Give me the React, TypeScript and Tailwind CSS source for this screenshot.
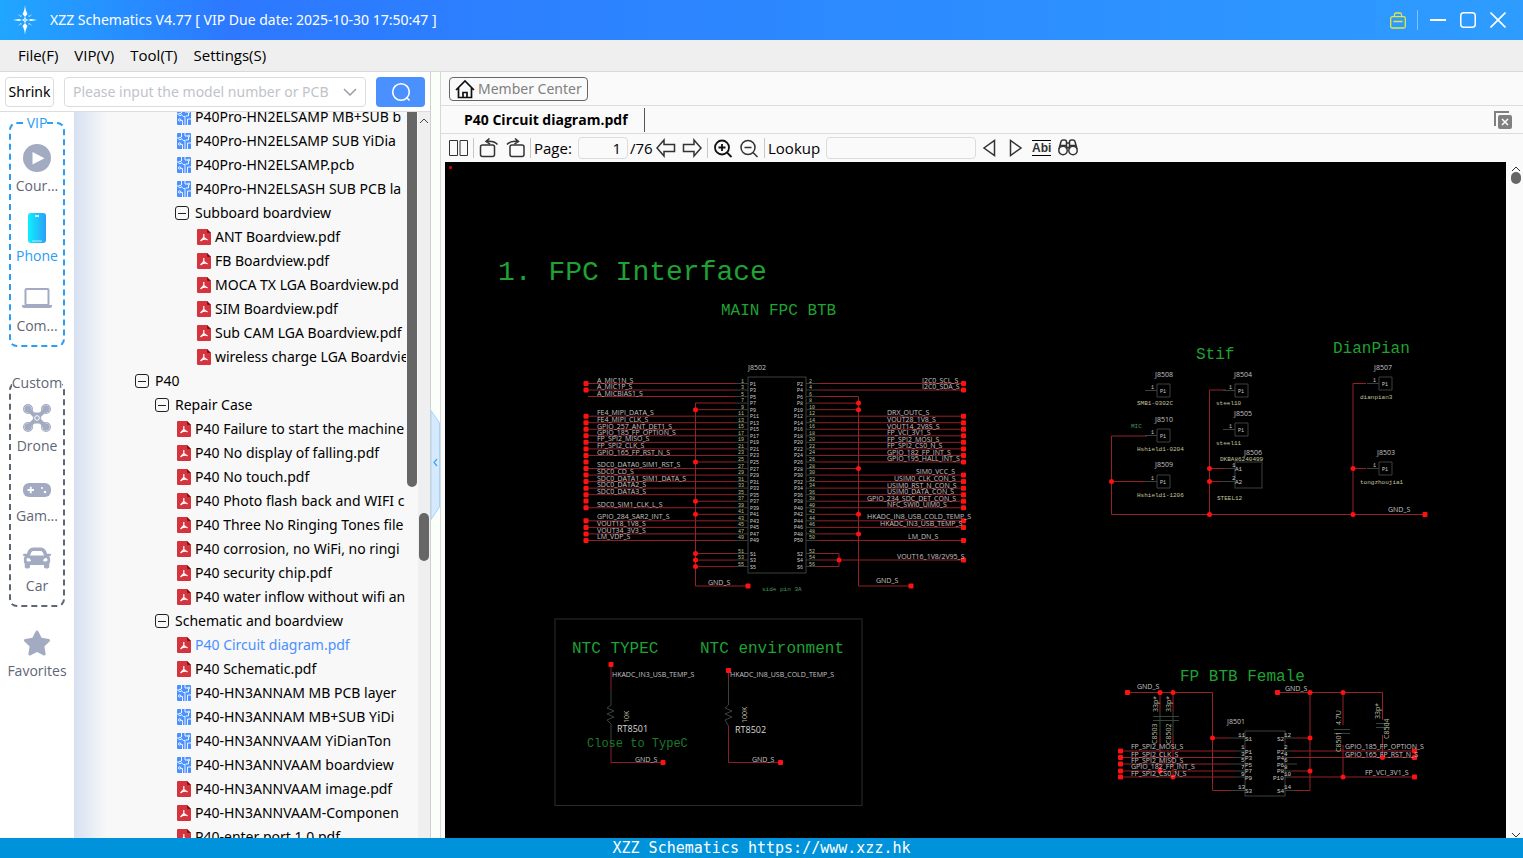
import { useState } from "react";
import type { ReactNode } from "react";
import { FaCar, FaStar } from "react-icons/fa";

// ---------------------------------------------------------------------------
// Types
// ---------------------------------------------------------------------------

type NodeKind = "folder" | "pdf" | "pcb";

interface TreeNode {
  level: number;
  kind: NodeKind;
  name: string;
}

interface Tag {
  x: number;
  y: number;
  text: string;
}

type Point = [number, number];

// ---------------------------------------------------------------------------
// Data
// ---------------------------------------------------------------------------

const TREE: TreeNode[] = [
  { level: 2, kind: "pcb", name: "P40Pro-HN2ELSAMP MB+SUB b" },
  { level: 2, kind: "pcb", name: "P40Pro-HN2ELSAMP SUB YiDia" },
  { level: 2, kind: "pcb", name: "P40Pro-HN2ELSAMP.pcb" },
  { level: 2, kind: "pcb", name: "P40Pro-HN2ELSASH SUB PCB la" },
  { level: 2, kind: "folder", name: "Subboard boardview" },
  { level: 3, kind: "pdf", name: "ANT Boardview.pdf" },
  { level: 3, kind: "pdf", name: "FB Boardview.pdf" },
  { level: 3, kind: "pdf", name: "MOCA TX LGA Boardview.pd" },
  { level: 3, kind: "pdf", name: "SIM Boardview.pdf" },
  { level: 3, kind: "pdf", name: "Sub CAM LGA Boardview.pdf" },
  { level: 3, kind: "pdf", name: "wireless charge LGA Boardvie" },
  { level: 0, kind: "folder", name: "P40" },
  { level: 1, kind: "folder", name: "Repair Case" },
  { level: 2, kind: "pdf", name: "P40 Failure to start the machine" },
  { level: 2, kind: "pdf", name: "P40 No display of falling.pdf" },
  { level: 2, kind: "pdf", name: "P40 No touch.pdf" },
  { level: 2, kind: "pdf", name: "P40 Photo flash back and WIFI c" },
  { level: 2, kind: "pdf", name: "P40 Three No Ringing Tones file" },
  { level: 2, kind: "pdf", name: "P40 corrosion, no WiFi, no ringi" },
  { level: 2, kind: "pdf", name: "P40 security chip.pdf" },
  { level: 2, kind: "pdf", name: "P40 water inflow without wifi an" },
  { level: 1, kind: "folder", name: "Schematic and boardview" },
  { level: 2, kind: "pdf", name: "P40 Circuit diagram.pdf" },
  { level: 2, kind: "pdf", name: "P40 Schematic.pdf" },
  { level: 2, kind: "pcb", name: "P40-HN3ANNAM MB PCB layer" },
  { level: 2, kind: "pcb", name: "P40-HN3ANNAM MB+SUB YiDi" },
  { level: 2, kind: "pcb", name: "P40-HN3ANNVAAM YiDianTon" },
  { level: 2, kind: "pcb", name: "P40-HN3ANNVAAM boardview" },
  { level: 2, kind: "pdf", name: "P40-HN3ANNVAAM image.pdf" },
  { level: 2, kind: "pdf", name: "P40-HN3ANNVAAM-Componen" },
  { level: 2, kind: "pdf", name: "P40-enter port 1.0.pdf" },
];

const INDENT = ["pl-[61px]", "pl-[81px]", "pl-[101px]", "pl-[121px]"];

const MENUS = ["File(F)", "VIP(V)", "Tool(T)", "Settings(S)"];

// ---------------------------------------------------------------------------
// Icons
// ---------------------------------------------------------------------------

function Logo() {
  return (
    <svg width="26" height="30" viewBox="0 0 26 30" fill="#fff">
      <path d="M13 0Q13.500 6 15.500 9L13 12 10.500 9Q12.500 6 13 0Z M13 30Q13.500 24 15.500 21L13 18 10.500 21Q12.500 24 13 30Z" />
      <path d="M1 15 7 14 10 15 7 16Z M25 15 19 14 16 15 19 16Z" />
      <path d="M6.500 9.500 9 12V10M19.500 9.500 17 12V10M6.500 20.500 9 18V20M19.500 20.500 17 18V20" fill="none" stroke="#9fcdff" />
      <path d="M12.500 12.500V14.500H10.500M13.500 12.500V14.500H15.500M12.500 17.500V15.500H10.500M13.500 17.500V15.500H15.500" fill="none" stroke="#fff" strokeWidth=".8" />
    </svg>
  );
}

function PcbIcon() {
  return (
    <svg width="14" height="16" viewBox="0 0 14 16" fill="none">
      <rect width="14" height="16" rx="1" fill="#4a90ff" />
      <g stroke="#fff" strokeWidth=".9">
        <path d="M4.500 0V4M8 0V3H11M0 5H1.500M4.500 6 6.500 7.500H8V16M5.500 16V11.500H4M10.500 16V10H14M11.500 4V7H8.500" />
        <circle cx="3" cy="5.500" r="1.300" />
        <circle cx="2.700" cy="11" r="1.200" />
        <circle cx="11.800" cy="3" r="1" />
      </g>
    </svg>
  );
}

function PdfIcon() {
  return (
    <svg width="14" height="16" viewBox="0 0 14 16" fill="none">
      <path d="M1 0H10L14 4V15Q14 16 13 16H1Q0 16 0 15V1Q0 0 1 0Z" fill="#d5343e" />
      <path d="M10 0V3Q10 4 11 4H14Z" fill="#7d1219" />
      <path d="M6.800 5V8.500L3.500 12M6.800 8.500 10.500 11M4 11.500Q7 9.500 10.500 10.500" stroke="#fff" strokeWidth="1.200" />
    </svg>
  );
}

function CollapseIcon() {
  return (
    <svg width="14" height="14" viewBox="0 0 14 14" fill="none" stroke="#222">
      <rect x=".5" y=".5" width="13" height="13" rx="2.500" />
      <path d="M3 7.500H11" />
    </svg>
  );
}

function CourseIcon() {
  return (
    <svg width="28" height="28" viewBox="0 0 28 28">
      <circle cx="14" cy="14" r="14" fill="#a2abc1" />
      <path d="M9.500 8V20.500L21.500 14.200Z" fill="#fff" />
    </svg>
  );
}

function PhoneIcon() {
  return (
    <svg width="18" height="30" viewBox="0 0 18 30">
      <defs>
        <linearGradient id="phone" x1="0" y1="0" x2="1" y2="0">
          <stop offset="0" stopColor="#0ef0ff" />
          <stop offset="1" stopColor="#2b9ff8" />
        </linearGradient>
      </defs>
      <rect width="18" height="30" rx="3" fill="url(#phone)" />
      <path d="M7 3H11" stroke="#fff" strokeWidth="1.500" />
      <path d="M4 28H14" stroke="#b8efff" />
    </svg>
  );
}

function LaptopIcon() {
  return (
    <svg width="30" height="20" viewBox="0 0 30 20" fill="none">
      <rect x="3.500" y="1" width="23" height="16" rx="1" stroke="#a2abc1" strokeWidth="2" />
      <path d="M0 17H30V18Q30 20 28 20H2Q0 20 0 18Z" fill="#a2abc1" />
    </svg>
  );
}

function DroneIcon() {
  return (
    <svg width="28" height="28" viewBox="0 0 28 28" fill="none" stroke="#a2abc1">
      <path d="M5 5 11 11M23 5 17 11M5 23 11 17M23 23 17 17" strokeWidth="4" />
      <g fill="#a2abc1">
        <circle cx="5" cy="5" r="3.200" />
        <circle cx="23" cy="5" r="3.200" />
        <circle cx="5" cy="23" r="3.200" />
        <circle cx="23" cy="23" r="3.200" />
        <path d="M9.500 9H18.500L17.500 14 18.500 19H9.500L10.500 14Z" />
      </g>
      <g strokeWidth="1.200">
        <circle cx="5" cy="5" r="4.400" />
        <circle cx="23" cy="5" r="4.400" />
        <circle cx="5" cy="23" r="4.400" />
        <circle cx="23" cy="23" r="4.400" />
      </g>
      <circle cx="14" cy="14" r="2.300" stroke="#fff" />
    </svg>
  );
}

function GameIcon() {
  return (
    <svg width="28" height="18" viewBox="0 0 28 18">
      <rect y="4" width="28" height="14" rx="6" fill="#a2abc1" />
      <path d="M4.500 11H11M7.750 7.700V14.300" stroke="#fff" strokeWidth="1.800" />
      <circle cx="19" cy="9" r="1" fill="#fff" />
      <circle cx="22" cy="13" r="1.300" fill="#fff" />
    </svg>
  );
}

// Line icon in the viewer toolbar; every one is drawn on a 20px square.
function ToolIcon({ children }: { children: ReactNode }) {
  return (
    <svg width="20" height="20" viewBox="0 0 20 20" fill="none" stroke="#333" strokeWidth="1.500">
      {children}
    </svg>
  );
}

// ---------------------------------------------------------------------------
// Title bar and menu
// ---------------------------------------------------------------------------

function TitleBar() {
  return (
    <header className="flex h-10 shrink-0 items-center bg-linear-to-r from-[#20a6ff] via-[#2d78ff] via-15% to-[#2e9cff] pr-[17px] pl-3 text-white">
      <Logo />
      <h1 className="ml-3 font-['Noto_Sans',sans-serif] text-sm">XZZ Schematics V4.77 [ VIP Due date: 2025-10-30 17:50:47 ]</h1>
      <div className="ml-auto flex items-center">
        <button aria-label="Toolbox">
          <svg width="16" height="17" viewBox="0 0 16 17" fill="none" stroke="#e3e63c" strokeWidth="1.300">
            <rect x=".7" y="4.700" width="14.600" height="11.300" rx="1.500" />
            <path d="M4.500 4.500V2.500Q4.500 1 6 1H10Q11.500 1 11.500 2.500V4.500M3.500 9.500H12.500" />
          </svg>
        </button>
        <span className="mr-3 ml-[11px] h-5 w-px bg-white/40" />
        <button aria-label="Minimize">
          <svg width="16" height="16" viewBox="0 0 16 16" stroke="#fff" strokeWidth="2">
            <path d="M0 8H16" />
          </svg>
        </button>
        <button aria-label="Maximize" className="ml-3.5">
          <svg width="16" height="16" viewBox="0 0 16 16" fill="none" stroke="#fff" strokeWidth="1.500">
            <rect x=".75" y=".75" width="14.500" height="14.500" rx="3" />
          </svg>
        </button>
        <button aria-label="Close" className="ml-3.5">
          <svg width="16" height="16" viewBox="0 0 16 16" stroke="#fff" strokeWidth="1.600">
            <path d="M.5.5 15.500 15.500M15.500.5.5 15.500" />
          </svg>
        </button>
      </div>
    </header>
  );
}

function MenuBar() {
  return (
    <nav className="flex h-8 shrink-0 items-center gap-4 border-b border-[#d8d8d8] bg-[#efefef] pl-[18px]">
      {MENUS.map((menu) => (
        <button key={menu}>{menu}</button>
      ))}
    </nav>
  );
}

// ---------------------------------------------------------------------------
// Left side
// ---------------------------------------------------------------------------

function SearchRow() {
  return (
    <div className="flex h-10 shrink-0 items-center border-b border-[#dcdcdc] bg-white px-[5px] font-['Noto_Sans',sans-serif] text-sm">
      <button className="h-[30px] w-[49px] shrink-0 rounded border border-[#dcdcdc]">Shrink</button>
      <div className="ml-2.5 flex h-[30px] min-w-0 grow items-center rounded border border-[#dcdcdc] pr-2 pl-2">
        <input
          aria-label="Model number or PCB"
          placeholder="Please input the model number or PCB"
          className="min-w-0 grow outline-none placeholder:text-[#bfc3ca]"
        />
        <svg width="14" height="8" viewBox="0 0 14 8" fill="none" stroke="#9a9ea8" strokeWidth="1.500" className="ml-1 shrink-0">
          <path d="M1 1 7 7 13 1" />
        </svg>
      </div>
      <button aria-label="Search" className="ml-2.5 flex h-[30px] w-[49px] shrink-0 items-center justify-center rounded-sm bg-[#4a90ff]">
        <svg width="20" height="20" viewBox="0 0 20 20" fill="none" stroke="#fff" strokeWidth="1.600">
          <circle cx="10" cy="10" r="8.300" />
          <path d="M15.500 15.500 18.500 18.500" />
        </svg>
      </button>
    </div>
  );
}

function RailItem({ icon, label, active }: { icon: ReactNode; label: string; active?: boolean }) {
  return (
    <button className={`flex h-14 flex-col items-center ${active ? "text-[#2b9df4]" : "text-[#5f6675]"}`}>
      <span className="flex h-8 items-center text-[#a2abc1]">{icon}</span>
      <span className="leading-6">{label}</span>
    </button>
  );
}

function Rail() {
  return (
    <aside className="flex w-[74px] shrink-0 flex-col items-center overflow-hidden bg-white text-sm">
      <fieldset className="w-14 rounded-lg border-2 border-dashed border-[#2b9df4]">
        <legend className="mx-auto leading-[22px] text-[#2b9df4]">VIP</legend>
        <div className="flex flex-col gap-3.5 pt-2 pb-[7px]">
          <RailItem icon={<CourseIcon />} label="Cour..." />
          <RailItem icon={<PhoneIcon />} label="Phone" active />
          <RailItem icon={<LaptopIcon />} label="Com..." />
        </div>
      </fieldset>
      <fieldset className="mt-[25px] w-14 rounded-lg border-2 border-dashed border-[#5f6675]">
        <legend className="mx-auto leading-[22px] text-[#5f6675]">Custom</legend>
        <div className="flex flex-col gap-3.5 pt-2 pb-[7px]">
          <RailItem icon={<DroneIcon />} label="Drone" />
          <RailItem icon={<GameIcon />} label="Gam..." />
          <RailItem icon={<FaCar size={28} />} label="Car" />
        </div>
      </fieldset>
      <div className="mt-5">
        <RailItem icon={<FaStar size={28} />} label="Favorites" />
      </div>
    </aside>
  );
}

function FileTree() {
  const [selected, setSelected] = useState("P40 Circuit diagram.pdf");

  return (
    <div className="min-w-0 grow overflow-hidden bg-linear-to-r from-[#d7e1f1] to-[#f8f8f8] to-10% font-['Noto_Sans',sans-serif] text-sm">
      <ul className="-mt-[7px]">
        {TREE.map((node) => (
          <li key={node.name} className={`h-6 ${INDENT[node.level]}`}>
            <button
              onClick={() => setSelected(node.name)}
              className={`flex h-6 items-center whitespace-nowrap ${node.name === selected ? "text-[#4a90ff]" : "text-black"}`}
            >
              <span className={`w-5 shrink-0 ${node.kind === "folder" ? "" : "pl-0.5"}`}>
                {node.kind === "folder" && <CollapseIcon />}
                {node.kind === "pdf" && <PdfIcon />}
                {node.kind === "pcb" && <PcbIcon />}
              </span>
              {node.name}
            </button>
          </li>
        ))}
      </ul>
    </div>
  );
}

function LeftPanel() {
  return (
    <section className="flex w-[431px] shrink-0 flex-col border-r border-[#d0d0d0]">
      <SearchRow />
      <div className="flex min-h-0 grow">
        <Rail />
        <FileTree />
        {/* list scroll bar */}
        <div className="w-3 shrink-0 bg-[#f8f8f8]">
          <div className="mx-px h-[375px] rounded-b-full bg-[#666]" />
        </div>
        {/* panel scroll bar */}
        <div className="flex w-3 shrink-0 flex-col items-center bg-[#efefef] pt-1.5">
          <svg width="10" height="6" viewBox="0 0 10 6" fill="none" stroke="#444">
            <path d="M1 5 5 1 9 5" />
          </svg>
          <div className="mt-[389px] h-12 w-2.5 rounded-full bg-[#666]" />
        </div>
      </div>
    </section>
  );
}

function Splitter() {
  return (
    <div className="flex w-2.5 shrink-0 items-center border-r border-[#d8d8d8] bg-[#fafffa] pt-5">
      <button aria-label="Hide panel">
        <svg width="9" height="110" viewBox="0 0 9 110" fill="none">
          <path d="M0 .5 8.500 13V97L0 109.500Z" fill="#d6eaff" stroke="#a5d4f8" />
          <path d="M6 49 3 52.500 6 56" stroke="#3ea6ef" strokeWidth="1.200" />
        </svg>
      </button>
    </div>
  );
}

// ---------------------------------------------------------------------------
// Viewer toolbar
// ---------------------------------------------------------------------------

function Separator() {
  return <span className="h-5 w-px shrink-0 bg-[#c8c8c8]" />;
}

function Toolbar() {
  return (
    <div className="flex h-7 shrink-0 items-center pl-2">
      <button aria-label="Two pages">
        <ToolIcon>
          <path d="M.5 2.500H8.500V17.500H.5ZM11 2.500H18.500V17.500H11Z" strokeWidth="1" />
        </ToolIcon>
      </button>
      <span className="w-1" />
      <Separator />
      <button aria-label="Rotate left" className="ml-[5px]">
        <ToolIcon>
          <rect x="1.500" y="7" width="14" height="11.500" rx="2" />
          <path d="M18.500 6.500Q15 2.500 7 3.500M10.500.5 7 3.500 11 6" />
        </ToolIcon>
      </button>
      <button aria-label="Rotate right" className="ml-[7px]">
        <ToolIcon>
          <rect x="4" y="7" width="14" height="11.500" rx="2" />
          <path d="M1 6.500Q4.500 2.500 12.500 3.500M9 .5 12.500 3.500 8.500 6" />
        </ToolIcon>
      </button>
      <span className="w-1" />
      <Separator />
      <label htmlFor="page" className="ml-[3px] w-11">
        Page:
      </label>
      <input id="page" defaultValue="1" className="h-[22px] w-[50px] rounded-sm border border-[#dcdcdc] px-1.5 text-right outline-none" />
      <span className="ml-0.5 w-6">/76</span>
      <button aria-label="Previous page" className="ml-0.5">
        <ToolIcon>
          <path d="M1 10 8 2V6.500H18.500V13.500H8V18Z" />
        </ToolIcon>
      </button>
      <button aria-label="Next page" className="ml-1.5">
        <ToolIcon>
          <path d="M19 10 12 2V6.500H1.500V13.500H12V18Z" />
        </ToolIcon>
      </button>
      <span className="w-[5px]" />
      <Separator />
      <button aria-label="Zoom in" className="ml-[5px]">
        <ToolIcon>
          <g stroke="#111" strokeWidth="1.800">
            <circle cx="9" cy="9.500" r="7" />
            <path d="M14 14.500 18.500 19M5.500 9.500H12.500M9 6V13" />
          </g>
        </ToolIcon>
      </button>
      <button aria-label="Zoom out" className="ml-1.5">
        <ToolIcon>
          <circle cx="9" cy="9.500" r="7" />
          <path d="M14 14.500 18.500 19M5.500 9.500H12.500" />
        </ToolIcon>
      </button>
      <span className="w-[5px]" />
      <Separator />
      <label htmlFor="lookup" className="ml-[3px] w-[58px]">
        Lookup
      </label>
      <input id="lookup" className="h-[22px] w-[150px] rounded-sm border border-[#dcdcdc] px-1.5 outline-none" />
      <button aria-label="Find previous" className="ml-1">
        <ToolIcon>
          <path d="M14.500 2.500V17.500L4 10Z" />
        </ToolIcon>
      </button>
      <button aria-label="Find next" className="ml-[5px]">
        <ToolIcon>
          <path d="M5.500 2.500V17.500L16 10Z" />
        </ToolIcon>
      </button>
      <button className="ml-[7px] h-4 border-y border-black font-['Liberation_Sans',sans-serif] text-xs leading-[14px] font-bold text-[#333]">Abi</button>
      <button aria-label="Search all" className="ml-[7px]">
        <ToolIcon>
          <circle cx="5" cy="12.500" r="4.200" />
          <circle cx="15" cy="12.500" r="4.200" />
          <path d="M1 11 3 3.500Q3.500 2 5 2H6.500Q8.500 2 8.500 4V11M19 11 17 3.500Q16.500 2 15 2H13.500Q11.500 2 11.500 4V11M8.500 5H11.500M8.500 9.500H11.500M2 7.500H8M12 7.500H18" />
        </ToolIcon>
      </button>
    </div>
  );
}

// ---------------------------------------------------------------------------
// Schematic drawing
// ---------------------------------------------------------------------------

const PIN_TOP = 383.5;
const PIN_STEP = 6.54;

const rowY = (row: number) => PIN_TOP + row * PIN_STEP;

const NET_TAGS: Tag[] = [
  { x: 597, y: 383, text: "A_MIC1N_S" },
  { x: 597, y: 389, text: "A_MIC1P_S" },
  { x: 597, y: 396, text: "A_MICBIAS1_S" },
  { x: 597, y: 415, text: "FE4_MIPI_DATA_S" },
  { x: 597, y: 422, text: "FE4_MIPI_CLK_S" },
  { x: 597, y: 429, text: "GPIO_257_ANT_DET1_S" },
  { x: 597, y: 435, text: "GPIO_185_FP_OPTION_S" },
  { x: 597, y: 441, text: "FP_SPI2_MISO_S" },
  { x: 597, y: 448, text: "FP_SPI2_CLK_S" },
  { x: 597, y: 455, text: "GPIO_165_FP_RST_N_S" },
  { x: 597, y: 467, text: "SDC0_DATA0_SIM1_RST_S" },
  { x: 597, y: 474, text: "SDC0_CD_S" },
  { x: 597, y: 481, text: "SDC0_DATA1_SIM1_DATA_S" },
  { x: 597, y: 487, text: "SDC0_DATA2_S" },
  { x: 597, y: 494, text: "SDC0_DATA3_S" },
  { x: 597, y: 507, text: "SDC0_SIM1_CLK_L_S" },
  { x: 597, y: 519, text: "GPIO_284_SAR2_INT_S" },
  { x: 597, y: 526, text: "VOUT18_1V8_S" },
  { x: 597, y: 533, text: "VOUT34_3V3_S" },
  { x: 597, y: 539, text: "LM_VDP_S" },
  { x: 708, y: 585, text: "GND_S" },
  { x: 922, y: 383, text: "I2C0_SCL_S" },
  { x: 922, y: 389, text: "I2C0_SDA_S" },
  { x: 887, y: 415, text: "DRX_OUTC_S" },
  { x: 887, y: 422, text: "VOUT28_1V8_S" },
  { x: 887, y: 429, text: "VOUT14_2V8S_S" },
  { x: 887, y: 435, text: "FP_VCI_3V1_S" },
  { x: 887, y: 442, text: "FP_SPI2_MOSI_S" },
  { x: 887, y: 448, text: "FP_SPI2_CS0_N_S" },
  { x: 887, y: 455, text: "GPIO_182_FP_INT_S" },
  { x: 887, y: 461, text: "GPIO_195_HALL_INT_S" },
  { x: 916, y: 474, text: "SIM0_VCC_S" },
  { x: 894, y: 481, text: "USIM0_CLK_CON_S" },
  { x: 887, y: 488, text: "USIM0_RST_N_CON_S" },
  { x: 887, y: 494, text: "USIM0_DATA_CON_S" },
  { x: 867, y: 501, text: "GPIO_234_SDC_DET_CON_S" },
  { x: 887, y: 507, text: "NFC_SWI0_UIM0_S" },
  { x: 867, y: 519, text: "HKADC_IN8_USB_COLD_TEMP_S" },
  { x: 880, y: 526, text: "HKADC_IN3_USB_TEMP_S" },
  { x: 908, y: 539, text: "LM_DN_S" },
  { x: 897, y: 559, text: "VOUT16_1V8/2V95_S" },
  { x: 876, y: 583, text: "GND_S" },
  { x: 748, y: 370, text: "J8502" },
  // NTC
  { x: 612, y: 677, text: "HKADC_IN3_USB_TEMP_S" },
  { x: 730, y: 677, text: "HKADC_IN8_USB_COLD_TEMP_S" },
  { x: 635, y: 762, text: "GND_S" },
  { x: 752, y: 762, text: "GND_S" },
  // shields
  { x: 1155, y: 377, text: "J8508" },
  { x: 1155, y: 422, text: "J8510" },
  { x: 1155, y: 467, text: "J8509" },
  { x: 1234, y: 377, text: "J8504" },
  { x: 1234, y: 416, text: "J8505" },
  { x: 1244, y: 455, text: "J8506" },
  { x: 1374, y: 370, text: "J8507" },
  { x: 1377, y: 455, text: "J8503" },
  { x: 1388, y: 512, text: "GND_S" },
  // FP BTB
  { x: 1137, y: 689, text: "GND_S" },
  { x: 1285, y: 691, text: "GND_S" },
  { x: 1227, y: 724, text: "J8501" },
  { x: 1131, y: 749, text: "FP_SPI2_MOSI_S" },
  { x: 1131, y: 757, text: "FP_SPI2_CLK_S" },
  { x: 1131, y: 763, text: "FP_SPI2_MISO_S" },
  { x: 1131, y: 769, text: "GPIO_182_FP_INT_S" },
  { x: 1131, y: 776, text: "FP_SPI2_CS0_N_S" },
  { x: 1345, y: 749, text: "GPIO_185_FP_OPTION_S" },
  { x: 1345, y: 757, text: "GPIO_165_FP_RST_N_S" },
  { x: 1365, y: 775, text: "FP_VCI_3V1_S" },
];

const PART_TAGS: Tag[] = [
  { x: 1137, y: 405, text: "SMB1-0302C" },
  { x: 1137, y: 451, text: "Hshield1-0204" },
  { x: 1137, y: 497, text: "Hshield1-1206" },
  { x: 1216, y: 405, text: "steel10" },
  { x: 1216, y: 445, text: "steel11" },
  { x: 1220, y: 461, text: "DKBA86240499" },
  { x: 1217, y: 500, text: "STEEL12" },
  { x: 1360, y: 399, text: "dianpian3" },
  { x: 1360, y: 484, text: "tongzhoujia1" },
];

const SIDEWAYS_TAGS: Tag[] = [
  { x: 629, y: 723, text: "10K" },
  { x: 747, y: 723, text: "100K" },
  { x: 1158, y: 712, text: "33p*" },
  { x: 1171, y: 712, text: "33p*" },
  { x: 1157, y: 744, text: "C8503" },
  { x: 1171, y: 744, text: "C8502" },
  { x: 1341, y: 725, text: "4.7U" },
  { x: 1341, y: 752, text: "C8501" },
  { x: 1380, y: 719, text: "33p*" },
  { x: 1389, y: 739, text: "C8504" },
];

// Rows counted from the first pin pair of J8502.
const LEFT_NETS = [0, 1, 5, 6, 7, 8, 9, 10, 11, 13, 14, 15, 16, 17, 19, 21, 22, 23, 24];
const LEFT_GROUND = [4, 12, 18, 20, 26, 27, 28];
const RIGHT_NETS = [0, 1, 5, 6, 7, 8, 9, 10, 11, 12, 14, 15, 16, 17, 18, 19, 21, 22, 24];
const RIGHT_GROUND = [3, 4, 13, 20, 23];
const PIN_ROWS = Array.from({ length: 25 }, (_, i) => i);
const SHIELD_ROWS = [0, 1, 2];

const SQUARES: Point[] = [
  [748, 586],
  [911, 586],
  [963.5, 560],
  [586, 462],
  [586, 501],
  [611, 664.5],
  [728.5, 670.5],
  [663, 762.5],
  [780.5, 762.5],
  [1425, 514.5],
  [1127.5, 692.5],
  [1277.5, 692.5],
  [1120.5, 751],
  [1120.5, 757.5],
  [1120.5, 764],
  [1120.5, 771],
  [1120.5, 777],
  [1414.5, 751],
  [1414.5, 757.5],
  [1414.5, 777],
];

const JOINTS: Point[] = [
  [839, 560],
  [1111.5, 481.5],
  [1209.5, 468.5],
  [1209.5, 481.5],
  [1209.5, 514.5],
  [1353, 468.5],
  [1353, 514.5],
  [1160, 692.5],
  [1173, 692.5],
  [1212.5, 738],
  [1160, 771],
  [1173, 777],
  [1310, 692.5],
  [1310, 738],
  [1310, 771],
  [1343, 692.5],
  [1343, 777],
  [1382.5, 757.5],
];

const BOXES: Point[] = [
  [1157, 384],
  [1157, 429],
  [1157, 475],
  [1235, 384],
  [1235, 423],
  [1379, 377],
  [1379, 462],
];

function Square({ at: [x, y] }: { at: Point }) {
  return <rect x={x - 2.5} y={y - 2.5} width="5" height="5" rx="1" fill="#f11" />;
}

function Joint({ at: [x, y] }: { at: Point }) {
  return <circle cx={x} cy={y} r="2.500" fill="#f11" />;
}

function Schematic() {
  return (
    <svg viewBox="445 162 1061 676" preserveAspectRatio="xMinYMin slice" className="block h-full w-full bg-black" role="img" aria-label="FPC Interface schematic">
      <rect x="449" y="166" width="3" height="3" rx="1" fill="#c00" />

      {/* wires */}
      <g fill="none" stroke="#962028">
        {LEFT_NETS.map((row) => (
          <path key={row} d={`M586 ${rowY(row)}H735`} />
        ))}
        <path d="M588 396.500H735M695.500 403H735M695.500 403V586H748" />
        {LEFT_GROUND.map((row) => (
          <path key={row} d={`M695.500 ${rowY(row)}H735`} />
        ))}
        {RIGHT_NETS.map((row) => (
          <path key={row} d={`M818 ${rowY(row)}H963`} />
        ))}
        <path d="M818 396.500H858.500V586H911" />
        {RIGHT_GROUND.map((row) => (
          <path key={row} d={`M818 ${rowY(row)}H858.500`} />
        ))}
        <path d="M818 553.500H839V566.500H818M818 560H963" />
        <path d="M611 664V690M611 745V762.500H663M728.500 670V680M728.500 726V762.500H780" stroke="#8c1c34" />
        <path d="M1147 436H1111.500V514.500H1425M1111.500 481.500H1147M1226 390H1209.500V514.500M1209.500 468.500H1225M1209.500 481.500H1220M1366 383.500H1353V514.500M1353 468.500H1366" />
        <path d="M1127 692.500H1212.500V790.500H1230M1212.500 738H1230M1160 692V712M1173 692V712M1160 735V771M1173 735V777M1120 751H1235M1120 757.500H1235M1120 764H1230M1120 771H1235M1120 777H1235" />
        <path d="M1277 692.500H1382.500V720M1310 692V790.500H1295M1310 738H1295M1343 692V725M1343 745V777M1382.500 735V757M1292 751H1414M1292 757.500H1414M1292 771H1310M1292 777H1414" />
      </g>

      {/* component outlines and pin stubs */}
      <g fill="none" stroke="#3a403c">
        {PIN_ROWS.map((row) => (
          <path key={row} d={`M735 ${rowY(row)}H748M806 ${rowY(row)}H818`} />
        ))}
        <path d="M735 553.500H748M735 560H748M735 566.500H748M806 553.500H818M806 560H818M806 566.500H818" />
        <rect x="748" y="377" width="58" height="196" />
        <rect x="555" y="619" width="307" height="186.500" stroke="#2a2c2a" />
        <path d="M611 690V705L607 708 614 711 607 714 614 717 607 720 611 724V745" />
        <path d="M728.500 680V705L725 708 732 711 725 714 732 717 725 720 728.500 726" />
        {BOXES.map(([x, y]) => (
          <path key={`${x}-${y}`} d={`M${x} ${y}h13v13h-13ZM${x - 12} ${y + 6.5}h12`} />
        ))}
        <rect x="1235" y="462" width="27" height="26" />
        <path d="M1225 468.500H1235M1220 481.500H1235" />
        <rect x="1245" y="731" width="40" height="65" />
        <path d="M1230 738H1245M1230 790.500H1245M1235 751H1245M1235 757.500H1245M1230 764H1245M1235 771H1245M1235 777H1245" />
        <path d="M1285 738H1295M1285 790.500H1295M1285 751H1292M1285 757.500H1292M1285 764H1297M1285 771H1292M1285 777H1292" />
        <path d="M1153 716.500H1179M1153 720.500H1179M1160 712V735M1173 712V735M1334 729.500H1350M1334 733.500H1350M1376 723.500H1390M1376 727.500H1390" stroke="#34483a" />
      </g>

      {/* ends and joints */}
      {LEFT_NETS.map((row) => (
        <Square key={row} at={[586, rowY(row)]} />
      ))}
      {RIGHT_NETS.map((row) => (
        <Square key={row} at={[963.5, rowY(row)]} />
      ))}
      {LEFT_GROUND.map((row) => (
        <Joint key={row} at={[695.5, rowY(row)]} />
      ))}
      {RIGHT_GROUND.map((row) => (
        <Joint key={row} at={[858.5, rowY(row)]} />
      ))}
      {SQUARES.map((p) => (
        <Square key={p.join()} at={p} />
      ))}
      {JOINTS.map((p) => (
        <Joint key={p.join()} at={p} />
      ))}

      {/* net names */}
      <g className="font-['Open_Sans',sans-serif] text-[7px]" fill="#c4c4c4">
        {NET_TAGS.map((tag) => (
          <text key={`${tag.x}-${tag.y}`} x={tag.x} y={tag.y}>
            {tag.text}
          </text>
        ))}
      </g>
      <g className="font-['Open_Sans',sans-serif] text-[9px]" fill="#d8d8d8">
        <text x="617" y="732">RT8501</text>
        <text x="735" y="733">RT8502</text>
      </g>
      <g className="font-['Open_Sans',sans-serif] text-[7px]" fill="#b9b9a0">
        {SIDEWAYS_TAGS.map((tag) => (
          <text key={`${tag.x}-${tag.y}`} transform={`translate(${tag.x} ${tag.y}) rotate(-90)`}>
            {tag.text}
          </text>
        ))}
      </g>
      <g className="font-['Liberation_Mono',monospace] text-[6px]" fill="#c4c49c">
        {PART_TAGS.map((tag) => (
          <text key={`${tag.x}-${tag.y}`} x={tag.x} y={tag.y}>
            {tag.text}
          </text>
        ))}
      </g>

      {/* pins */}
      <g className="font-['Liberation_Mono',monospace] text-[5px]" fill="#d0d0d0">
        {PIN_ROWS.map((row) => (
          <g key={row}>
            <text x="744" y={rowY(row) - 1} textAnchor="end" fill="#c0c098">
              {row * 2 + 1}
            </text>
            <text x="750" y={rowY(row) + 2}>{`P${row * 2 + 1}`}</text>
            <text x="803" y={rowY(row) + 2} textAnchor="end">{`P${row * 2 + 2}`}</text>
            <text x="809" y={rowY(row) - 1} fill="#c0c098">
              {row * 2 + 2}
            </text>
          </g>
        ))}
        {SHIELD_ROWS.map((row) => (
          <g key={row}>
            <text x="744" y={rowY(row + 26) - 1} textAnchor="end" fill="#c0c098">
              {row * 2 + 51}
            </text>
            <text x="750" y={rowY(row + 26) + 2}>{`S${row * 2 + 1}`}</text>
            <text x="803" y={rowY(row + 26) + 2} textAnchor="end">{`S${row * 2 + 2}`}</text>
            <text x="809" y={rowY(row + 26) - 1} fill="#c0c098">
              {row * 2 + 52}
            </text>
          </g>
        ))}
        {BOXES.map(([x, y]) => (
          <g key={`${x}-${y}`}>
            <text x={x + 3} y={y + 9}>P1</text>
            <text x={x - 6} y={y + 5}>1</text>
          </g>
        ))}
      </g>
      <g className="font-['Liberation_Mono',monospace] text-[6px]" fill="#c8c8c8">
        <text x="1235" y="471">A1</text>
        <text x="1235" y="484">A2</text>
        <text x="1232" y="467">1</text>
        <text x="1232" y="480">2</text>
        <text x="1245" y="741">S1</text>
        <text x="1245" y="754">P1</text>
        <text x="1245" y="760">P3</text>
        <text x="1245" y="767">P5</text>
        <text x="1245" y="773">P7</text>
        <text x="1245" y="780">P9</text>
        <text x="1245" y="793">S3</text>
        <text x="1277" y="741">S2</text>
        <text x="1277" y="754">P2</text>
        <text x="1277" y="760">P4</text>
        <text x="1277" y="767">P6</text>
        <text x="1277" y="773">P8</text>
        <text x="1273" y="780">P10</text>
        <text x="1277" y="793">S4</text>
        <text x="1238" y="737">11</text>
        <text x="1284" y="737">12</text>
        <text x="1238" y="789">13</text>
        <text x="1284" y="789">14</text>
        <text x="1284" y="776">10</text>
        <text x="1241" y="749">1</text>
        <text x="1241" y="756">3</text>
        <text x="1241" y="762">5</text>
        <text x="1241" y="769">7</text>
        <text x="1241" y="776">9</text>
        <text x="1284" y="749">2</text>
        <text x="1284" y="756">4</text>
        <text x="1284" y="762">6</text>
        <text x="1284" y="769">8</text>
      </g>

      {/* headings */}
      <g className="font-['Liberation_Mono',monospace]" fill="#1fa233">
        <text x="498" y="280" className="text-[28px]">1. FPC Interface</text>
        <g className="text-[16px]">
          <text x="721" y="315">MAIN FPC BTB</text>
          <text x="1196" y="359">Stif</text>
          <text x="1333" y="353">DianPian</text>
          <text x="572" y="653">NTC TYPEC</text>
          <text x="700" y="653">NTC environment</text>
          <text x="1180" y="681">FP BTB Female</text>
        </g>
        <text x="587" y="747" className="text-[12px]" fill="#1c7a2c">Close to TypeC</text>
        <g className="text-[6px]" fill="#4a9a5c">
          <text x="762" y="591">side pin 3A</text>
          <text x="1131" y="428">MIC</text>
        </g>
      </g>
    </svg>
  );
}

// ---------------------------------------------------------------------------
// Viewer
// ---------------------------------------------------------------------------

function Viewer() {
  return (
    <section className="flex min-w-0 grow flex-col bg-[#fafafa]">
      <div className="flex h-[34px] shrink-0 items-center border-b border-[#dcdcdc] pl-2">
        <button className="flex h-6 items-center rounded border border-[#666] px-[5px] font-['Noto_Sans',sans-serif] text-sm text-[#808080]">
          <svg width="20" height="20" viewBox="0 0 20 20" fill="none" stroke="#111" strokeWidth="1.700" className="mr-[3px]">
            <path d="M1 11 10 2 19 11M3.500 9V18.500H16.500V9M8 18V13.500H12V18" />
          </svg>
          Member Center
        </button>
      </div>
      <div className="flex h-7 shrink-0 items-center border-b border-[#dcdcdc] pr-[11px]">
        <button className="h-6 border-r border-[#555] pr-4 pl-[23px] text-sm font-bold">P40 Circuit diagram.pdf</button>
        <button aria-label="Close all tabs" className="ml-auto">
          <svg width="18" height="18" viewBox="0 0 18 18" fill="none">
            <path d="M1 15V1H15" stroke="#808080" strokeWidth="2" />
            <rect x="4" y="4" width="14" height="14" rx="2" fill="#808080" />
            <path d="M8 8 14 14M14 8 8 14" stroke="#fff" strokeWidth="1.500" />
          </svg>
        </button>
      </div>
      <Toolbar />
      <div className="flex min-h-0 grow pl-1">
        <div className="min-w-0 grow">
          <Schematic />
        </div>
        <div className="flex w-[17px] shrink-0 flex-col items-center pt-1 pl-[3px]">
          <svg width="10" height="6" viewBox="0 0 10 6" fill="none" stroke="#333">
            <path d="M1 5 5 1 9 5" />
          </svg>
          <div className="h-3 w-2.5 rounded-full bg-[#666]" />
          <svg width="10" height="6" viewBox="0 0 10 6" fill="none" stroke="#333" className="mt-auto">
            <path d="M1 1 5 5 9 1" />
          </svg>
        </div>
      </div>
    </section>
  );
}

// ---------------------------------------------------------------------------
// App
// ---------------------------------------------------------------------------

export default function App() {
  return (
    <div className="flex h-screen flex-col overflow-hidden font-['Open_Sans','Noto_Sans',sans-serif] text-[15px] text-black">
      <TitleBar />
      <MenuBar />
      <main className="flex min-h-0 grow">
        <LeftPanel />
        <Splitter />
        <Viewer />
      </main>
      <footer className="h-5 shrink-0 bg-[#0092db] text-center font-['DejaVu_Sans_Mono',monospace] text-[15px] leading-5 text-white">
        XZZ Schematics https://www.xzz.hk
      </footer>
    </div>
  );
}
